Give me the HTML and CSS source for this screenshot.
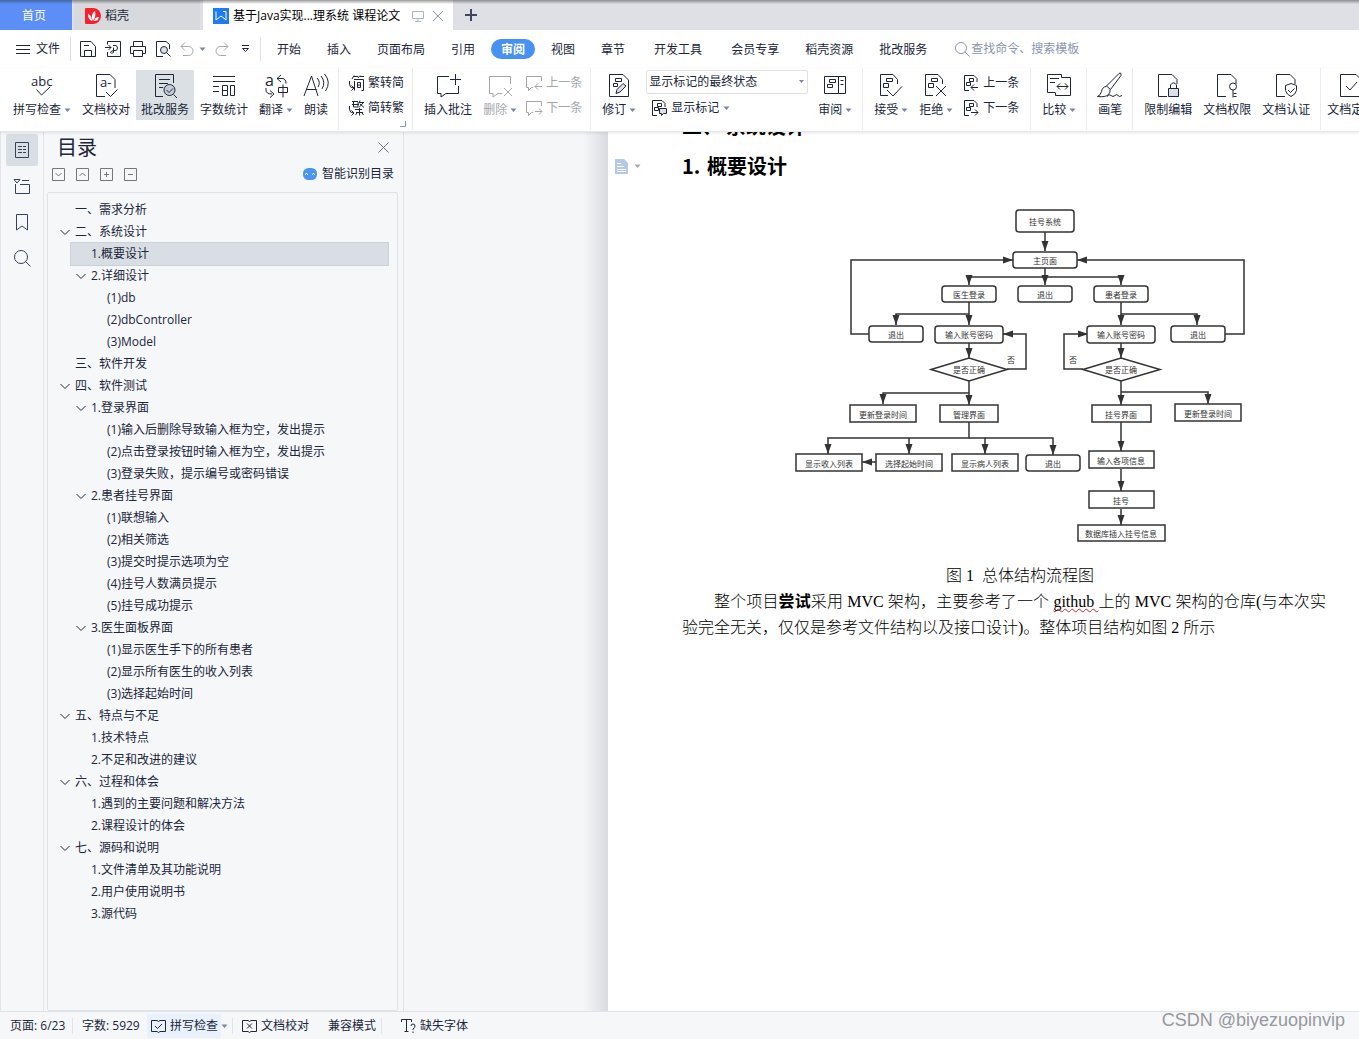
FILE: index.html
```html
<!DOCTYPE html>
<html lang="zh-CN">
<head>
<meta charset="utf-8">
<meta name="viewport" content="width=device-width, initial-scale=1">
<title>基于Java实现挂号管理系统 课程论文</title>
<link rel="stylesheet" href="styles.css">
</head>
<body>
<svg class="sprite" aria-hidden="true">
  <symbol id="caret" viewBox="0 0 7 5"><path d="M0.500 0.500h6l-3 3.500z" fill="#7a86a0" stroke="none"/></symbol>
  <symbol id="doc" viewBox="0 0 28 28"><path d="M13 24.500H4.500V2.500H18l5 5V12"/></symbol>
  <symbol id="smalldoc" viewBox="0 0 16 16"><path d="M6 15.500H1.500V0.500H11l3 3V7M6.500 3.500h4v3h-4zM3.500 7.500h4v3h-4z"/></symbol>
  <symbol id="smallbubble" viewBox="0 0 16 16"><path d="M15.500 6V1.500H0.500v11h2v3l3-3H7"/></symbol>
  <symbol id="convert" viewBox="0 0 16 16"><path d="M1.500 6v3q0 4 4 4M3.500 10.500L6 13l-2.500 2.500"/></symbol>
  <symbol id="chev" viewBox="0 0 10 10"><path d="M0.500 3L5 7.500 9.500 3"/></symbol>
</svg>

<div class="app">
  <header class="tabs">
    <button class="tab home">首页</button>
    <button class="tab docer">
      <svg width="16" height="16" viewBox="0 0 16 16"><path d="M1 0h7a8 8 0 0 1 0 16H1q-1 0-1-1V1q0-1 1-1z" fill="#f5222d" stroke="none"/><path d="M8 13C6 9 7 5 10 3c1 4 0 7-2 10zM7 13C4 12 3 9 3 6c3 1 4 4 4 7zM9 13c1-3 2-4 5-4-1 3-2 4-5 4z" fill="#fff" stroke="none"/></svg>
      <span>稻壳</span>
    </button>
    <div class="tab current">
      <svg width="16" height="16" viewBox="0 0 16 16"><path d="M0 0h16v16H0z" fill="#1f7bf2" stroke="none"/><path d="M3 3.500v8.500l5-4 5 4V3.500h-3" stroke="#fff"/></svg>
      <span class="title">基于Java实现...理系统 课程论文</span>
      <svg class="pale" width="12" height="12" viewBox="0 0 12 12"><path d="M0.500 1.500h11v7H0.500zM6 8.500V11M3 11.500h6"/></svg>
      <button class="close" aria-label="关闭标签"><svg width="12" height="12" viewBox="0 0 12 12"><path d="M1 1l10 10M11 1L1 11"/></svg></button>
    </div>
    <button class="add" aria-label="新建标签"><svg width="12" height="12" viewBox="0 0 12 12"><path d="M6 0v12M0 6h12" stroke-width="2"/></svg></button>
  </header>

  <nav class="menu">
    <button class="file"><svg width="14" height="11" viewBox="0 0 14 11"><path d="M0 1.500h14M0 5.500h14M0 9.500h14"/></svg>文件</button>
    <div class="quick">
      <button aria-label="保存"><svg width="16" height="16" viewBox="0 0 16 16"><path d="M1.500 15.500h-1v-15H11l4.500 5v10zM4.500 15V9.500h7V15M4 4.500h5"/></svg></button>
      <button aria-label="输出为PDF"><svg width="16" height="16" viewBox="0 0 16 16"><path d="M2.500 3.500v-3h13v15h-13V11M0 6.500h6M3.500 4L6 6.500 3.500 9M8 4.500h2q2.500 0 2.500 2.500T10 9.500H8.500M8.500 6.500v5q-2 1.500-3 0 0-1.500 3-2"/></svg></button>
      <button aria-label="打印"><svg width="16" height="16" viewBox="0 0 16 16"><path d="M3.500 5V0.500h9V5M3.500 12.500H0.500v-7h15v7h-3M3.500 9.500h9v6h-9z"/></svg></button>
      <button aria-label="打印预览"><svg width="16" height="16" viewBox="0 0 16 16"><path d="M8 15.500H1.500V0.500H11l3.500 3V8"/><circle cx="9" cy="9" r="3.500" fill="#dde0e6"/><path d="M11.500 11.500l4 4"/></svg></button>
      <button class="off undo" aria-label="撤销"><svg width="14" height="14" viewBox="0 0 14 14"><path d="M5 0.500L1 4.500l4 4M1 4.500h7.500a4 4 0 0 1 0 9H3"/></svg><svg class="caret"><use href="#caret"/></svg></button>
      <button class="off" aria-label="恢复"><svg width="14" height="14" viewBox="0 0 14 14"><path d="M9 0.500l4 4-4 4M13 4.500H5.500a4 4 0 0 0 0 9H11"/></svg></button>
      <button class="more" aria-label="更多"><svg width="9" height="8" viewBox="0 0 9 8"><path d="M1 0.500h7M1.500 3.500h6l-3 3z"/></svg></button>
    </div>
    <div class="menus">
      <button>开始</button><button>插入</button><button>页面布局</button><button>引用</button><button class="active">审阅</button><button>视图</button><button>章节</button><button class="wide">开发工具</button><button class="wide">会员专享</button><button>稻壳资源</button><button>批改服务</button>
    </div>
    <label class="search"><svg width="15" height="15" viewBox="0 0 15 15"><circle cx="6" cy="6" r="5.500"/><path d="M10 10l4.500 4.500"/></svg><input type="text" placeholder="查找命令、搜索模板" aria-label="查找命令、搜索模板"></label>
  </nav>

  <div class="ribbon">
    <div class="group">
      <button class="big"><svg class="ic" viewBox="0 0 28 28"><text x="3" y="14" class="abc">abc</text><path d="M8.500 17.500l5 5.500 8.500-8"/></svg><span>拼写检查<svg class="caret"><use href="#caret"/></svg></span></button>
      <button class="big"><svg class="ic" viewBox="0 0 28 28"><path d="M13 24.500H4.500V2.500H18l5 5V16M14 20l4.500 4.500 7-7"/><text x="8" y="15" class="abc">a-</text></svg><span>文档校对</span></button>
      <button class="big on"><svg class="ic" viewBox="0 0 28 28"><path d="M12 24.500H4.500V2.500h18V11M8 7.500h11M8 11.500h9M8 15.500h4"/><circle cx="18.500" cy="18" r="5.500" fill="#c6ccd6"/><path d="M15.500 18l2.500 2.500 4-4M22.500 22.500l3.500 3.500"/></svg><span>批改服务</span></button>
      <button class="big"><svg class="ic" viewBox="0 0 28 28"><path d="M3 4.500h22M3 9.500h22M3 14.500h6M3 19.500h6M12.500 13.500h5v10h-5zM12.500 18.500h5M20.500 13.500h4v10h-4z"/></svg><span>字数统计</span></button>
      <button class="big"><svg class="ic" viewBox="0 0 28 28"><text x="3" y="14" class="abc large">a</text><path d="M19 3l-4 3.500 4 3.500M15 6.500h5q4 0 4 5M4 16v2q0 4 6 4M8 18.500L12 22l-4 3.500M16.500 15.500h9v5h-9zM21 12.500v13"/></svg><span>翻译<svg class="caret"><use href="#caret"/></svg></span></button>
      <button class="big"><svg class="ic" viewBox="0 0 28 28"><path d="M2 24L9.500 4 16 24M4.500 17.500h10M15 6q4 4 1 9M19 4q5 6 1 13M22.500 2q7 8 1 17"/></svg><span>朗读</span></button>
    </div>
    <div class="group launch">
      <div class="stack">
        <button class="small"><svg class="sm" viewBox="0 0 16 16"><use href="#convert"/><path d="M6 0.500L4 4M6 1.500h4M12 0.500L10 3M12 1.500h4M6.500 6v9.500M6 4.500h9.500v11h-2M9.500 7.500h3v5h-3zM9.500 10h3"/></svg>繁转简</button>
        <button class="small"><svg class="sm" viewBox="0 0 16 16"><use href="#convert"/><path d="M4 1.500h6M4 4.500h7M5.500 2v5H10V2M12 0.500l-1 3M11 2.500h5M15 3l-4 4.500M12 4l4 3.500M7 9.500h7M8 12.500h7M11.500 8v7.500M9 13l-1.500 2M14 13l1.500 2"/></svg>简转繁</button>
      </div>
      <svg class="corner" width="6" height="6" viewBox="0 0 6 6"><path d="M5.500 0v5.500H0"/></svg>
    </div>
    <div class="group">
      <button class="big"><svg class="ic" viewBox="0 0 28 28"><path d="M15 4.500H3.500v17h3.500v3.500l5-3.500h12.500V14M21.500 2v11M16 7.500h11"/></svg><span>插入批注</span></button>
      <button class="big off"><svg class="ic" viewBox="0 0 28 28"><path d="M24.500 12V4.500h-21v17h3.500v3.500l5-3.500H16M18 16l8 8M26 16l-8 8"/></svg><span>删除<svg class="caret"><use href="#caret"/></svg></span></button>
      <div class="stack">
        <button class="small off"><svg class="sm" viewBox="0 0 16 16"><use href="#smallbubble"/><path d="M9 11.500h7M12 8.500l-3 3 3 3"/></svg>上一条</button>
        <button class="small off"><svg class="sm" viewBox="0 0 16 16"><use href="#smallbubble"/><path d="M9 11.500h7M13 8.500l3 3-3 3"/></svg>下一条</button>
      </div>
    </div>
    <div class="group">
      <button class="big"><svg class="ic" viewBox="0 0 28 28"><path d="M4.500 2.500H18l5.500 5.500v16.500h-19zM10.500 6.500h6v3h-6zM8.500 11.500h4v3h-4z"/><path d="M11 21.500l1-4 6-6 3 2.500-6 6z" fill="#dde0e6"/></svg><span>修订<svg class="caret"><use href="#caret"/></svg></span></button>
      <div class="stack view">
        <select aria-label="标记显示方式"><option>显示标记的最终状态</option></select>
        <button class="small"><svg class="sm" viewBox="0 0 16 16"><use href="#smalldoc"/><path d="M8.500 8.500h7v5h-3l-2 2v-2h-2z" fill="#dde0e6"/></svg>显示标记<svg class="caret"><use href="#caret"/></svg></button>
      </div>
      <button class="big"><svg class="ic" viewBox="0 0 28 28"><path d="M3.500 4.500h21v17h-21zM17.500 4.500v17M19.500 8.500h3M19.500 12.500h3M8.500 7.500h6v3h-6zM6.500 12.500h5v3h-5z"/></svg><span>审阅<svg class="caret"><use href="#caret"/></svg></span></button>
    </div>
    <div class="group">
      <button class="big"><svg class="ic" viewBox="0 0 28 28"><path d="M11 23.500H3.500v-21H16l4.500 5V12M9.500 6.500h6v3h-6zM6.500 11.500h5v4h-5zM10 18l6 6 9-9.500"/></svg><span>接受<svg class="caret"><use href="#caret"/></svg></span></button>
      <button class="big"><svg class="ic" viewBox="0 0 28 28"><path d="M11 23.500H3.500v-21H16l4.500 5V12M9.500 6.500h6v3h-6zM6.500 11.500h5v4h-5zM14 14l10 10M24 14L14 24"/></svg><span>拒绝<svg class="caret"><use href="#caret"/></svg></span></button>
      <div class="stack roomy">
        <button class="small"><svg class="sm" viewBox="0 0 16 16"><use href="#smalldoc"/><path d="M8 12.500h7M11 9.500l-3 3 3 3"/></svg>上一条</button>
        <button class="small"><svg class="sm" viewBox="0 0 16 16"><use href="#smalldoc"/><path d="M8 12.500h7M12 9.500l3 3-3 3"/></svg>下一条</button>
      </div>
    </div>
    <div class="group">
      <button class="big"><svg class="ic" viewBox="0 0 28 28"><path d="M10 20.500H2.500v-18h14v3M5 6.500h9M5 10.500h5M16.500 5.500h9v18h-15v-3M12 14.500h11M15 11.500l-3 3 3 3M20 11.500l3 3-3 3"/></svg><span>比较<svg class="caret"><use href="#caret"/></svg></span></button>
    </div>
    <div class="group">
      <button class="big"><svg class="ic" viewBox="0 0 28 28"><path d="M25 1.500q-1-1-2 0L10.500 14l4 3.500L25 3.500zM10.500 14.500q-4 0-5 5-1 4-4 5 8 1 11-2 2-2 1.500-5M11 24.500q2-3 4-1t4 0 3 0 4 0"/></svg><span>画笔</span></button>
    </div>
    <div class="group">
      <button class="big"><svg class="ic" viewBox="0 0 28 28"><use href="#doc"/><path d="M14.500 16.500h10v8h-10z" fill="#dde0e6"/><path d="M16.500 16v-3q3-4.500 6 0v3"/></svg><span>限制编辑</span></button>
      <button class="big"><svg class="ic" viewBox="0 0 28 28"><use href="#doc"/><circle cx="20" cy="14.500" r="3.500"/><path d="M20 18v7.500M20.500 21.500h3M20.500 24.500h3"/></svg><span>文档权限</span></button>
      <button class="big"><svg class="ic" viewBox="0 0 28 28"><use href="#doc"/><path d="M19 11.500l5.500 2v5q-1 4-5.500 6-4.500-2-5.500-6v-5zM16 18l2.500 2.500 4-4"/></svg><span>文档认证</span></button>
    </div>
    <div class="group last">
      <button class="big"><svg class="ic" viewBox="0 0 28 28"><path d="M3.500 2.500H19l5 5v17H3.500zM9 14l4 4 7-8"/></svg><span>文档定稿</span></button>
    </div>
  </div>

  <main class="work">
    <aside class="rail">
      <button class="on" aria-label="目录"><svg width="16" height="18" viewBox="0 0 16 18"><path d="M1.500 1.500h13v15h-13zM4 5.500h4M9 5.500h3M4 8.500h4M9 8.500h3M4 11.500h4M9 11.500h3"/></svg></button>
      <button aria-label="章节"><svg width="18" height="16" viewBox="0 0 18 16"><path d="M1 1.500h6L4 5zM9 2.500h7M2.500 6v9.500h14v-9H7"/></svg></button>
      <button aria-label="书签"><svg width="12" height="17" viewBox="0 0 12 17"><path d="M0.500 0.500h11v15.500L6 12 0.500 16z"/></svg></button>
      <button aria-label="查找"><svg width="17" height="17" viewBox="0 0 17 17"><circle cx="7" cy="7" r="6.500"/><path d="M11.500 11.500l5 5"/></svg></button>
    </aside>
    <section class="panel">
      <div class="head"><h1>目录</h1><button aria-label="关闭目录"><svg width="11" height="11" viewBox="0 0 11 11"><path d="M0.500 0.500l10 10M10.500 0.500l-10 10"/></svg></button></div>
      <div class="tools">
        <button aria-label="展开"><svg viewBox="0 0 13 13"><path d="M0.500 0.500h12v12H0.500zM3.500 5l3 3 3-3"/></svg></button>
        <button aria-label="收起"><svg viewBox="0 0 13 13"><path d="M0.500 0.500h12v12H0.500zM3.500 8l3-3 3 3"/></svg></button>
        <button aria-label="增加级别"><svg viewBox="0 0 13 13"><path d="M0.500 0.500h12v12H0.500zM4 6.500h5M6.500 4v5"/></svg></button>
        <button aria-label="减少级别"><svg viewBox="0 0 13 13"><path d="M0.500 0.500h12v12H0.500zM4 6.500h5"/></svg></button>
        <a class="smart" href="#"><svg width="14" height="12" viewBox="0 0 14 12"><rect width="14" height="12" rx="5.500" fill="#4a95f0" stroke="none"/><path d="M2 6.500q1.500-2 3 0M9 6.500q1.500-2 3 0" stroke="#fff"/></svg>智能识别目录</a>
      </div>
      <ul class="tree">
        <li><a href="#">一、需求分析</a></li>
        <li><a href="#"><svg class="chev"><use href="#chev"/></svg>二、系统设计</a></li>
        <li class="l1 sel"><a href="#">1.概要设计</a></li>
        <li class="l1"><a href="#"><svg class="chev"><use href="#chev"/></svg>2.详细设计</a></li>
        <li class="l2"><a href="#">(1)db</a></li>
        <li class="l2"><a href="#">(2)dbController</a></li>
        <li class="l2"><a href="#">(3)Model</a></li>
        <li><a href="#">三、软件开发</a></li>
        <li><a href="#"><svg class="chev"><use href="#chev"/></svg>四、软件测试</a></li>
        <li class="l1"><a href="#"><svg class="chev"><use href="#chev"/></svg>1.登录界面</a></li>
        <li class="l2"><a href="#">(1)输入后删除导致输入框为空，发出提示</a></li>
        <li class="l2"><a href="#">(2)点击登录按钮时输入框为空，发出提示</a></li>
        <li class="l2"><a href="#">(3)登录失败，提示编号或密码错误</a></li>
        <li class="l1"><a href="#"><svg class="chev"><use href="#chev"/></svg>2.患者挂号界面</a></li>
        <li class="l2"><a href="#">(1)联想输入</a></li>
        <li class="l2"><a href="#">(2)相关筛选</a></li>
        <li class="l2"><a href="#">(3)提交时提示选项为空</a></li>
        <li class="l2"><a href="#">(4)挂号人数满员提示</a></li>
        <li class="l2"><a href="#">(5)挂号成功提示</a></li>
        <li class="l1"><a href="#"><svg class="chev"><use href="#chev"/></svg>3.医生面板界面</a></li>
        <li class="l2"><a href="#">(1)显示医生手下的所有患者</a></li>
        <li class="l2"><a href="#">(2)显示所有医生的收入列表</a></li>
        <li class="l2"><a href="#">(3)选择起始时间</a></li>
        <li><a href="#"><svg class="chev"><use href="#chev"/></svg>五、特点与不足</a></li>
        <li class="l1"><a href="#">1.技术特点</a></li>
        <li class="l1"><a href="#">2.不足和改进的建议</a></li>
        <li><a href="#"><svg class="chev"><use href="#chev"/></svg>六、过程和体会</a></li>
        <li class="l1"><a href="#">1.遇到的主要问题和解决方法</a></li>
        <li class="l1"><a href="#">2.课程设计的体会</a></li>
        <li><a href="#"><svg class="chev"><use href="#chev"/></svg>七、源码和说明</a></li>
        <li class="l1"><a href="#">1.文件清单及其功能说明</a></li>
        <li class="l1"><a href="#">2.用户使用说明书</a></li>
        <li class="l1"><a href="#">3.源代码</a></li>
      </ul>
    </section>
    <div class="gutter"></div>
    <article class="page">
      <div class="sheet">
        <h2 class="chapter"><span>二、</span>系统设计</h2>
        <h3><button class="note" aria-label="段落选项"><svg width="13" height="15" viewBox="0 0 13 15"><path d="M0 0h9l4 4v11H0z" fill="#b4c9ea" stroke="none"/><path d="M2 4.500h4M2 7.500h7M2 10.500h9M2 12.500h9" stroke="#fff"/></svg><svg class="caret"><use href="#caret"/></svg></button><span>1.</span>概要设计</h3>
        <svg class="flow" width="460" height="344" viewBox="790 204 460 344" role="img" aria-label="总体结构流程图">
          <defs><marker id="arr" markerWidth="10" markerHeight="8" refX="10" refY="4" orient="auto" markerUnits="userSpaceOnUse"><path d="M0 0.500L10 4 0 7.500z" fill="#333" stroke="none"/></marker></defs>
          <g class="wires">
            <path d="M1045 232V251"/><path d="M1045 268V285"/>
            <path d="M1045 277H969V285"/><path d="M1045 277H1121V285"/>
            <path d="M870 334H851V260H1013"/><path d="M1225 334H1244V260H1077"/>
            <path d="M969 302V325"/><path d="M969 314H896V325"/><path d="M1121 302V325"/><path d="M1121 314H1197V325"/>
            <path d="M969 343V358"/><path d="M1121 343V358"/>
            <path d="M1007 369H1026V334H1003"/><path d="M1083 369H1064V334H1088"/>
            <path d="M969 381V405"/><path d="M969 393H883V404"/><path d="M1121 381V405"/><path d="M1121 392H1208V404"/>
            <path d="M969 422V438H828V454"/><path d="M909 438V454"/><path d="M969 438H985V454"/><path d="M985 438H1053V455"/>
            <path d="M876 462H862"/><path d="M1121 422V451"/><path d="M1121 469V491"/><path d="M1121 509V525"/>
          </g>
          <g class="nodes">
            <rect x="1016" y="210" width="58" height="22" rx="3"/><rect x="1013" y="252" width="64" height="16" rx="3"/>
            <rect x="942" y="286" width="54" height="16" rx="3"/><rect x="1018" y="286" width="54" height="16" rx="3"/><rect x="1094" y="286" width="54" height="16" rx="3"/>
            <rect x="869" y="326" width="54" height="16" rx="3"/><rect x="935" y="326" width="68" height="17" rx="3"/><rect x="1087" y="326" width="68" height="17" rx="3"/><rect x="1171" y="326" width="54" height="16" rx="3"/>
            <path d="M931 369.500L969 358l38 11.500-38 11.500zM1083 369.500l38-11.500 39 11.500-39 11.500z"/>
            <rect x="850" y="405" width="66" height="17"/><rect x="940" y="405" width="58" height="17"/><rect x="1092" y="405" width="59" height="17"/><rect x="1175" y="404" width="66" height="17"/>
            <rect x="796" y="454" width="66" height="17"/><rect x="876" y="454" width="66" height="17"/><rect x="952" y="454" width="66" height="17"/><rect x="1026" y="455" width="54" height="16" rx="3"/>
            <rect x="1089" y="451" width="65" height="17"/><rect x="1089" y="491" width="65" height="17"/><rect x="1078" y="525" width="87" height="16"/>
          </g>
          <g class="names">
            <text x="1045" y="225">挂号系统</text><text x="1045" y="264">主页面</text><text x="969" y="298">医生登录</text><text x="1045" y="298">退出</text><text x="1121" y="298">患者登录</text>
            <text x="896" y="338">退出</text><text x="969" y="338">输入账号密码</text><text x="1121" y="338">输入账号密码</text><text x="1198" y="338">退出</text>
            <text x="969" y="373">是否正确</text><text x="1121" y="373">是否正确</text><text x="1011" y="363">否</text><text x="1073" y="363">否</text>
            <text x="883" y="418">更新登录时间</text><text x="969" y="418">管理界面</text><text x="1121" y="418">挂号界面</text><text x="1208" y="417">更新登录时间</text>
            <text x="829" y="467">显示收入列表</text><text x="909" y="467">选择起始时间</text><text x="985" y="467">显示病人列表</text><text x="1053" y="467">退出</text>
            <text x="1121" y="464">输入各项信息</text><text x="1121" y="504">挂号</text><text x="1121" y="537">数据库插入挂号信息</text>
          </g>
        </svg>
        <p class="caption">图 1&nbsp; 总体结构流程图</p>
        <p>整个项目<b>尝试</b>采用 MVC 架构，主要参考了一个 <span class="typo">github </span>上的 MVC 架构的仓库(与本次实验完全无关，仅仅是参考文件结构以及接口设计)。整体项目结构如图 2 所示</p>
      </div>
    </article>
  </main>

  <footer class="status">
    <span class="pages">页面: 6/23</span>
    <span class="words">字数: 5929</span>
    <button class="check"><svg width="15" height="14" viewBox="0 0 15 14"><path d="M6 1.500H0.500v11H6l1.500 1 1.500-1h5.500v-11H9l-1.500 1zM4 7l2.500 2.500L11 5"/></svg>拼写检查</button>
    <svg class="caret"><use href="#caret"/></svg>
    <button class="proof"><svg width="15" height="14" viewBox="0 0 15 14"><path d="M6 1.500H0.500v11H6l1.500 1 1.500-1h5.500v-11H9l-1.500 1zM5 4.500l5 5M10 4.500l-5 5"/></svg>文档校对</button>
    <button class="compat">兼容模式</button>
    <button class="fonts"><svg width="15" height="14" viewBox="0 0 15 14"><path d="M0.500 3V0.500h10V3M5.500 0.500v12M3.500 12.500h4M10 7q0-2 2-2t2 2q0 1.500-2 3v1M12 12.500v1.500"/></svg>缺失字体</button>
    <span class="credit">CSDN @biyezuopinvip</span>
  </footer>
</div>
</body>
</html>
```
FILE: styles.css
```css
* { box-sizing: border-box; }
body {
  margin: 0;
  font: 12px/16px "Open Sans", "Noto Sans CJK SC", sans-serif;
  color: #20263a;
  background: #f6f7f9;
}
button, select, input { font: inherit; color: inherit; border: 0; padding: 0; margin: 0; background: none; white-space: nowrap; }
a { color: inherit; text-decoration: none; }
ul, h1, h2, h3, p { margin: 0; padding: 0; list-style: none; }
svg { fill: none; stroke: currentColor; flex: none; }
.sprite { position: absolute; width: 0; height: 0; }
.caret { width: 7px; height: 5px; margin-left: 3px; }
.app { display: flex; flex-direction: column; height: 100vh; overflow: hidden; }

/* window tabs */
.tabs { display: flex; height: 30px; flex: none; background: linear-gradient(#8a8c90, #dee0e5 4px); }
.tab { display: flex; align-items: center; padding-top: 2px; }
.home { width: 72px; justify-content: center; padding-right: 4px; color: #fff; background: linear-gradient(#44659f, #5c8ef8 4px); }
.docer { width: 126px; margin-left: 2px; padding-left: 11px; gap: 4px; background: linear-gradient(#86888c, #d7d9dd 4px); }
.current { width: 250px; margin-left: 3px; padding-left: 10px; background: linear-gradient(#999, #fff 4px); color: #000; }
.title { width: 172px; margin: 0 7px 0 4px; white-space: nowrap; }
.pale { color: #a9b3cc; }
.close { display: flex; margin-left: 8px; color: #8a96b4; }
.add { display: flex; align-items: center; margin-left: 12px; color: #3f475c; }

/* menu row */
.menu { display: flex; flex: none; align-items: center; height: 38px; background: #fff; white-space: nowrap; }
.file { display: flex; align-items: center; gap: 6px; width: 71px; height: 24px; padding-left: 16px; border-right: 1px solid #dcdfe5; }
.quick { display: flex; align-items: center; gap: 9px; width: 190px; height: 24px; padding-left: 9px; border-right: 1px solid #dcdfe5; }
.quick button { display: flex; align-items: center; }
.undo .caret { margin-left: 5px; }
.more { margin-left: 3px; }
.off { color: #a4a6ab; }
.menus { display: flex; padding-left: 3px; }
.menus button { height: 20px; padding: 1px 13px 0; }
.menus .active { padding: 1px 10px 0; margin: 0 3px; border-radius: 10px; background: #4791f2; color: #fff; font-weight: 700; }
.menus .wide { margin-left: 3px; }
.search { display: flex; align-items: center; margin-left: 15px; gap: 1px; color: #8a96b0; }
.search input { width: 160px; }
.search input::placeholder { color: #8a96b0; opacity: 1; }

/* ribbon */
.ribbon { display: flex; flex: none; height: 64px; padding-left: 2px; background: #fff; border-bottom: 1px solid #e7e8ea; overflow: hidden; position: relative; z-index: 1; box-shadow: 0 1px 3px #0000001a; }
.group { display: flex; flex: none; gap: 1px; align-items: flex-start; padding: 2px 5px 0 6px; border-right: 1px solid #ebecef; height: 62px; }
.group.last { border: 0; padding-left: 1px; }
.big { display: flex; flex-direction: column; align-items: center; height: 50px; padding: 2px 5px 0; gap: 2px; }
.big.on { background: #dbe0e5; }
.big span { display: flex; align-items: center; }
.ic { width: 28px; height: 28px; margin: 0 -2px; overflow: visible; }
.sm { width: 16px; height: 16px; overflow: visible; }
.abc { font: 13px "Open Sans", sans-serif; fill: #20263a; stroke: none; }
.large { font-size: 16px; }
.stack { display: flex; flex-direction: column; gap: 5px; padding: 3px; }
.stack.roomy { padding: 3px 6px 3px 4px; }
.small { display: flex; align-items: center; gap: 4px; height: 20px; }
.small .caret { margin: 0; }
.launch { position: relative; }
.corner { position: absolute; right: 6px; bottom: 3px; color: #8a96b0; }
.stack.view { padding: 0 4px; }
.view select { width: 162px; height: 24px; padding: 0 2px; border: 1px solid #e0e2e6; border-radius: 2px; appearance: none;
  background: #fff url("data:image/svg+xml,%3Csvg xmlns='http://www.w3.org/2000/svg' width='5' height='4'%3E%3Cpath d='M0 0h5L2.500 3z' fill='%237a86a0'/%3E%3C/svg%3E") no-repeat right 3px center; }
.view .small { margin: -1px 5px 0; }

/* work area */
.work { display: flex; flex: 1; min-height: 0; }
.rail { display: flex; flex-direction: column; flex: none; align-items: center; gap: 4px; width: 44px; padding-top: 2px; border: solid #e2e4e9; border-width: 0 1px; color: #35415e; }
.rail button { display: flex; align-items: center; justify-content: center; width: 32px; height: 32px; border-radius: 2px; }
.rail .on { background: #d9dee5; }
.panel { display: flex; flex-direction: column; flex: none; width: 360px; padding: 0 5px 0 3px; border-right: 1px solid #e2e4e9; }
.head { display: flex; align-items: center; justify-content: space-between; height: 30px; padding: 0 9px 0 10px; }
.head h1 { font: 20px/30px "Noto Sans CJK SC", sans-serif; }
.head button { display: flex; color: #6b7385; }
.tools { display: flex; align-items: center; gap: 11px; height: 24px; padding: 0 4px 0 5px; }
.tools button { display: flex; color: #74777e; }
.tools button svg { width: 13px; height: 13px; }
.smart { display: flex; align-items: center; gap: 5px; margin-left: auto; }
.tree { flex: 1; margin-top: 6px; padding: 6px 9px 6px 7px; border: 1px solid #dfe2e7; border-radius: 2px; }
.tree li { display: flex; margin-left: 16px; padding-left: 4px; height: 22px; line-height: 22px; }
.tree .l1 { padding-left: 20px; }
.tree .l2 { padding-left: 36px; }
.tree .sel { background: #d9dde4; outline: 1px solid #cbd1da; }
.tree a { display: flex; align-items: center; white-space: nowrap; }
.chev { width: 10px; height: 10px; margin: 0 5px 0 -15px; }
.gutter { flex: 0 1 204px; background: linear-gradient(to right, #f5f6f8 88%, #d9dbdf); }

/* document */
.page { flex: 1; min-width: 0; padding-left: 74px; background: #fff; overflow: hidden; color: #000; }
.sheet { width: 644px; font: 300 16px/26px "Liberation Serif", "Noto Sans CJK SC", serif; }
.sheet h2, .sheet h3 { display: flex; font: 700 20px/40px "Noto Sans CJK SC", sans-serif; }
.chapter { margin-top: -26px; }
.chapter span { width: 44px; }
.sheet h3 span { width: 25px; }
.note { display: flex; align-items: center; width: 67px; margin-left: -67px; }
.note .caret { margin-left: 6px; opacity: 0.7; }
.flow { display: block; margin: 18px 0 0 108px; }
.wires { stroke: #333; stroke-width: 1.500px; }
.wires path { marker-end: url(#arr); }
.nodes { stroke: #333; stroke-width: 1.500px; fill: #fff; }
.names { font: 8px "Noto Sans CJK SC", sans-serif; fill: #333; stroke: none; text-anchor: middle; }
.sheet p { text-indent: 32px; text-align: justify; }
.sheet .caption { margin-top: 15px; text-align: center; }
.sheet b { font-weight: 700; }
.typo { text-decoration: underline wavy #e02020 1px; text-decoration-skip-ink: none; text-underline-offset: 1px; }

/* status bar */
.status { display: flex; flex: none; align-items: center; height: 28px; padding: 1px 0 0 10px; border-top: 1px solid #dfe2e6; background: #f5f7f9; white-space: nowrap; }
.pages { width: 63px; border-right: 1px solid #dfe2e7; }
.words { width: 74px; padding-left: 9px; }
.status button { display: flex; align-items: center; gap: 4px; }
.check { width: 74px; height: 24px; padding-left: 4px; background: #e8f1fc; }
.status > .caret { margin-left: 0; }
.proof { margin-left: 4px; padding-left: 9px; border-left: 1px solid #dfe2e7; }
.compat { width: 73px; padding-left: 19px; border-right: 1px solid #dfe2e7; }
.fonts { margin-left: 19px; }
.credit { margin-left: auto; padding: 0 14px 12px 0; font: 18px/20px "Liberation Sans", sans-serif; color: #97999d; }
```
